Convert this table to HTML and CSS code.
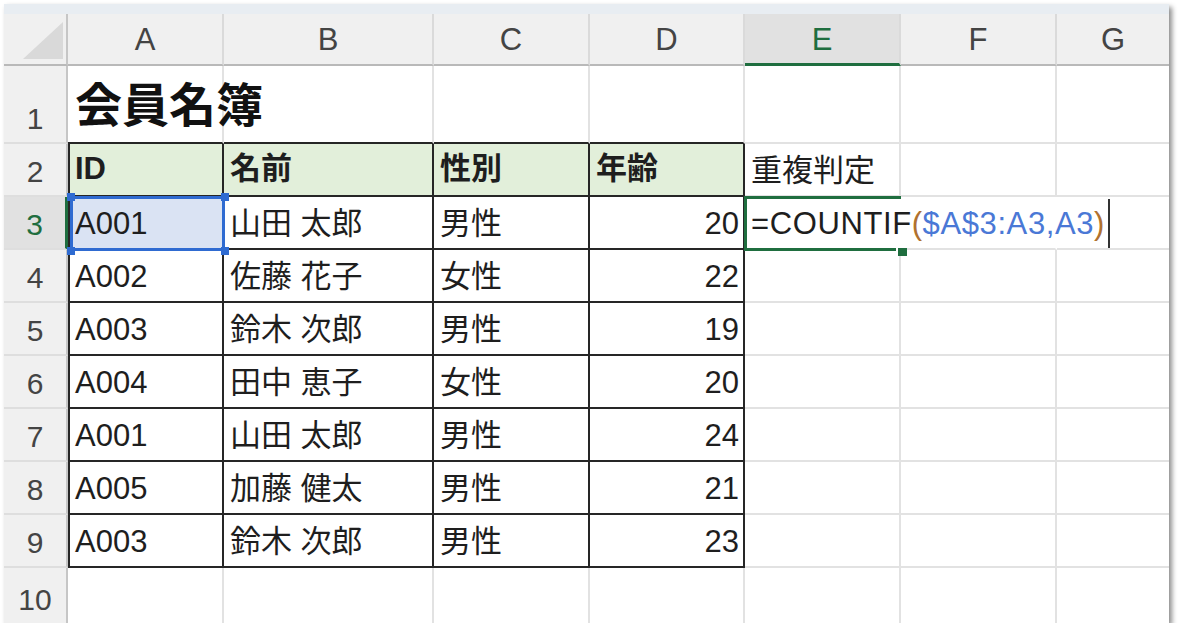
FILE: index.html
```html
<!DOCTYPE html>
<html lang="ja">
<head>
<meta charset="utf-8">
<title>会員名簿</title>
<link rel="stylesheet" href="styles.css">
</head>
<body>
<div class="sheet">
  <div class="strip"></div>

  <div class="corner"><svg class="tri" width="40" height="37" viewBox="0 0 40 37"><polygon points="0,37 40,37 40,0" fill="#d9d9d9"/></svg></div>
  <div class="ch">A</div>
  <div class="ch">B</div>
  <div class="ch">C</div>
  <div class="ch">D</div>
  <div class="ch on">E</div>
  <div class="ch">F</div>
  <div class="ch last">G</div>

  <div class="rh">1</div>
  <div class="c tb title">会員名簿</div>
  <div class="c tb"></div>
  <div class="c tb"></div>
  <div class="c tb"></div>
  <div class="c"></div>
  <div class="c"></div>
  <div class="c last"></div>

  <div class="rh">2</div>
  <div class="c t tl head">ID</div>
  <div class="c t head">名前</div>
  <div class="c t head">性別</div>
  <div class="c t head">年齢</div>
  <div class="c">重複判定</div>
  <div class="c"></div>
  <div class="c last"></div>

  <div class="rh on">3</div>
  <div class="c t tl sela">A001<span class="knob k-tl"></span><span class="knob k-tr"></span><span class="knob k-bl"></span><span class="knob k-br"></span></div>
  <div class="c t">山田 太郎</div>
  <div class="c t">男性</div>
  <div class="c t num">20</div>
  <div class="c edit"><span class="fx">=COUNTIF<span class="par">(</span><span class="ref">$A$3:A3,A3</span><span class="par">)</span></span></div>
  <div class="c spill"></div>
  <div class="c last"></div>

  <div class="rh">4</div>
  <div class="c t tl">A002</div>
  <div class="c t">佐藤 花子</div>
  <div class="c t">女性</div>
  <div class="c t num">22</div>
  <div class="c"></div>
  <div class="c"></div>
  <div class="c last"></div>

  <div class="rh">5</div>
  <div class="c t tl">A003</div>
  <div class="c t">鈴木 次郎</div>
  <div class="c t">男性</div>
  <div class="c t num">19</div>
  <div class="c"></div>
  <div class="c"></div>
  <div class="c last"></div>

  <div class="rh">6</div>
  <div class="c t tl">A004</div>
  <div class="c t">田中 恵子</div>
  <div class="c t">女性</div>
  <div class="c t num">20</div>
  <div class="c"></div>
  <div class="c"></div>
  <div class="c last"></div>

  <div class="rh">7</div>
  <div class="c t tl">A001</div>
  <div class="c t">山田 太郎</div>
  <div class="c t">男性</div>
  <div class="c t num">24</div>
  <div class="c"></div>
  <div class="c"></div>
  <div class="c last"></div>

  <div class="rh">8</div>
  <div class="c t tl">A005</div>
  <div class="c t">加藤 健太</div>
  <div class="c t">男性</div>
  <div class="c t num">21</div>
  <div class="c"></div>
  <div class="c"></div>
  <div class="c last"></div>

  <div class="rh">9</div>
  <div class="c t tl">A003</div>
  <div class="c t">鈴木 次郎</div>
  <div class="c t">男性</div>
  <div class="c t num">23</div>
  <div class="c"></div>
  <div class="c"></div>
  <div class="c last"></div>

  <div class="rh end">10</div>
  <div class="c end"></div>
  <div class="c end"></div>
  <div class="c end"></div>
  <div class="c end"></div>
  <div class="c end"></div>
  <div class="c end"></div>
  <div class="c end last"></div>
</div>
</body>
</html>
```

FILE: styles.css
```css
* { box-sizing: border-box; }

html, body {
  margin: 0;
  background: #ffffff;
}

body {
  font-family: "Liberation Sans", "Noto Sans CJK JP", sans-serif;
}

.sheet {
  margin: 4px 0 0 4px;
  width: 1165px;
  height: 619px;
  display: grid;
  grid-template-columns: 64px 156px 210px 156px 155px 156px 156px 112px;
  grid-template-rows: 10px 52px 78px repeat(8, 53px) 55px;
  background: #ffffff;
  box-shadow: 3px 3px 5px rgba(0, 0, 0, 0.45);
}

.strip {
  grid-column: 1 / -1;
  background: #e8edf2;
}

.corner {
  background: #f0f0f0;
  border-right: 2px solid #c6c6c6;
  border-bottom: 2px solid #b9b9b9;
  display: flex;
  justify-content: flex-end;
  align-items: flex-end;
  padding: 0 3px 5px 0;
}

.tri { display: block; }

.ch {
  background: #f0f0f0;
  border-right: 2px solid #dadada;
  border-bottom: 2px solid #b9b9b9;
  display: flex;
  align-items: center;
  justify-content: center;
  font-size: 31px;
  line-height: 36px;
  color: #444444;
  padding-top: 2px;
}

.ch.last { border-right: none; }

.ch.on {
  background: #e1e1e1;
  border-bottom: 3px solid #1f6e3f;
  color: #1f6e3f;
}

.rh {
  background: #f0f0f0;
  border-right: 2px solid #c6c6c6;
  border-bottom: 2px solid #dedede;
  display: flex;
  align-items: flex-end;
  justify-content: center;
  font-size: 30px;
  line-height: 36px;
  color: #444444;
  padding-bottom: 5px;
}

.rh.on {
  background: #e1e1e1;
  border-right: 3px solid #1f6e3f;
  color: #1f6e3f;
}

.rh.end, .c.end { border-bottom: none; }

.c {
  border-right: 2px solid #e2e2e2;
  border-bottom: 2px solid #e2e2e2;
  display: flex;
  align-items: flex-end;
  padding: 0 6px 6px 6px;
  font-size: 31px;
  line-height: 36px;
  color: #1e1e1e;
  white-space: nowrap;
  min-width: 0;
}

.c.last { border-right: none; }

.c.t {
  border-right-color: #262626;
  border-bottom-color: #262626;
}

.c.tl {
  border-left: 2px solid #262626;
  padding-left: 5px;
}

.c.tb { border-bottom-color: #262626; }

.c.head {
  background: #e2efda;
  font-weight: bold;
  padding-bottom: 8px;
}

.c.num {
  justify-content: flex-end;
  padding-right: 4px;
}

.c.title {
  font-size: 47px;
  font-weight: bold;
  line-height: 56px;
  padding-bottom: 8px;
  padding-left: 7px;
  color: #111111;
}

/* range reference highlight on A3 */
.c.sela {
  background: #dae3f3;
  position: relative;
}

.c.sela::before {
  content: "";
  position: absolute;
  top: -1px;
  left: 0;
  right: -3px;
  bottom: -3px;
  border: 3px solid #2f6bd1;
}

.knob {
  position: absolute;
  width: 8px;
  height: 8px;
  background: #2f6bd1;
}

.k-tl { left: -3px; top: -4px; }
.k-tr { right: -7px; top: -4px; }
.k-bl { left: -3px; bottom: -7px; }
.k-br { right: -7px; bottom: -7px; }

/* active cell being edited */
.c.edit {
  position: relative;
  border-right-color: transparent;
  z-index: 2;
}

.c.edit::before {
  content: "";
  position: absolute;
  top: -1px;
  left: -1px;
  right: -2px;
  bottom: -3px;
  border-top: 3px solid #1f6e3f;
  border-left: 3px solid #1f6e3f;
  border-bottom: 3px solid #1f6e3f;
}

.c.edit::after {
  content: "";
  position: absolute;
  left: 151px;
  top: 50px;
  width: 9px;
  height: 8px;
  background: #1f6e3f;
  border-left: 2px solid #ffffff;
  border-top: 1px solid #ffffff;
}

.c.spill { border-right-color: transparent; }

.fx {
  position: relative;
  display: inline-block;
  letter-spacing: 0.6px;
}

.fx::after {
  content: "";
  position: absolute;
  right: -5px;
  top: -7px;
  bottom: -6px;
  width: 2px;
  background: #333333;
}

.par { color: #b0712f; }
.ref { color: #4a78d6; }
```
